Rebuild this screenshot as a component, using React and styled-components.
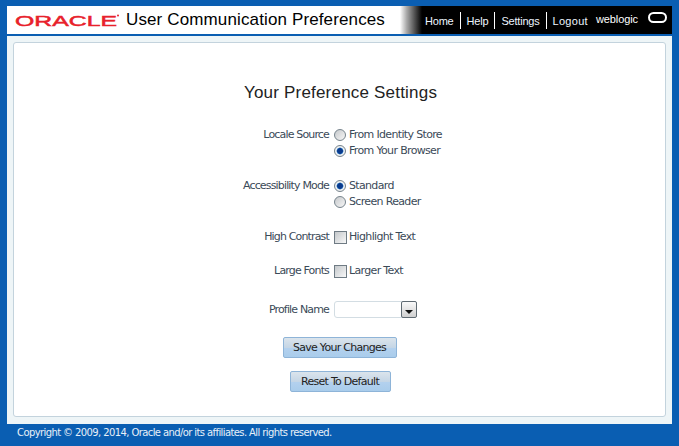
import React from "react";
import styled, { createGlobalStyle } from "styled-components";

const Global = createGlobalStyle`
  html, body { margin: 0; padding: 0; background: #0a5eb2; }
  body { font-family: "DejaVu Sans", Tahoma, sans-serif; }
`;
const Page = styled.div`
  width: 679px; height: 446px; box-sizing: border-box; padding: 6px 7px 0;
  background: #0a5eb2; display: flex; flex-direction: column; overflow: hidden;
`;
const Header = styled.header`
  height: 28px; display: flex; align-items: stretch; background: #fff; flex: none;
`;
const Brand = styled.div`
  display: flex; align-items: center; box-sizing: border-box; padding-left: 8px; width: 393px; flex: none;
`;
const Logo = styled.svg`
  width: 105px; height: 16px; flex: none; display: block;
`;
const AppTitle = styled.h1`
  margin: 0 0 0 6px; font: 400 17px "Liberation Sans", sans-serif; letter-spacing: .13px; color: #000; white-space: nowrap;
`;
const Fade = styled.div`
  width: 22px; flex: none; background: linear-gradient(90deg, #fff 0%, #aaa 30%, #555 65%, #000 100%);
`;
const Nav = styled.nav`
  flex: 1; background: #000; display: flex; align-items: center; padding-left: 3px; position: relative;
`;
const NavLink = styled.a`
  font: 11px "Liberation Sans", sans-serif; letter-spacing: ${p => (p.$last ? ".3px" : "-.2px")}; color: #eef6ff; padding: 0 ${p => (p.$last ? 0 : 6)}px 0 0; margin-right: ${p => (p.$last ? 8 : 6)}px; height: 17px; line-height: 19px;
  border-right: ${p => (p.$last ? "none" : "1px solid #fff")};
  white-space: nowrap;
`;
const User = styled.span`
  font: 11px "Liberation Sans", sans-serif; color: #fff; margin: -3px 0 0 0; letter-spacing: -.1px;
`;
const Oval = styled.span`
  position: absolute; left: 226px; top: 6px; width: 15px; height: 7px; border: 2px solid #fff; border-radius: 6px;
`;
const Rule = styled.div`
  height: 2px; background: #0a5eb2; flex: none;
`;
const Panel = styled.main`
  height: 388px; box-sizing: border-box; padding: 6px 6px 7px; background: #eef5f7; flex: none;
`;
const Card = styled.section`
  height: 100%; box-sizing: border-box; background: #fff; border: 1px solid #c3d3dd; border-radius: 3px;
  display: flex; flex-direction: column; align-items: stretch; padding-top: 40px;
  font-size: 11px; color: #333;
`;
const Title = styled.h2`
  margin: 0 0 24px; padding-left: 2px; text-align: center; font: 400 17px "Liberation Sans", sans-serif; letter-spacing: .2px; color: #222; line-height: 20px; height: 20px;
`;
const Row = styled.div`
  display: grid; grid-template-columns: 315px 1fr; column-gap: 5px; align-items: start; margin-bottom: ${p => p.$gap}px;
`;
const Label = styled.div`
  text-align: right; font: 11px/16px "DejaVu Sans", sans-serif; letter-spacing: -.84px; color: #3b4a58; white-space: nowrap;
  padding-top: ${p => p.$drop || 0}px;
`;
const Options = styled.div`
  display: flex; flex-direction: column;
`;
const Option = styled.div`
  height: 16px; display: flex; align-items: center;
  font: 11px/16px "DejaVu Sans", sans-serif; letter-spacing: -.66px; color: #3b4a58; white-space: nowrap;
`;
const Radio = styled.span`
  width: 12px; height: 12px; margin-right: 3px; border-radius: 50%; flex: none; box-sizing: border-box; border: 1px solid #76838c;
  background: ${p => (p.$on
    ? "radial-gradient(circle, #0a3a8c 0 2.5px, #3f88cc 3.1px, #eef0f2 3.8px)"
    : "linear-gradient(135deg, #c6c9cc, #f6f6f6)")};
`;
const Check = styled.span`
  width: 13px; height: 13px; margin-right: 2px; flex: none; box-sizing: border-box; border: 1px solid #6f7b84;
  background: linear-gradient(135deg, #c4c8cb, #f8f8f8);
`;
const Select = styled.div`
  width: 83px; height: 17px; box-sizing: border-box; border: 1px solid #d3dde3; border-radius: 3px; display: flex; justify-content: flex-end; background: #fff;
`;
const Arrow = styled.span`
  width: 16px; margin: -1px -1px -1px 0; box-sizing: border-box; border: 1px solid #5f6a72; border-radius: 2px; background: linear-gradient(#fafafa, #cfcfcf);
  display: flex; align-items: flex-end; justify-content: center; padding-bottom: 3px;
  &::before { content: ""; border: 4px solid transparent; border-top: 4px solid #111; border-bottom: 0; }
`;
const Actions = styled.div`
  display: flex; flex-direction: column; align-items: center; gap: 13px;
`;
const Button = styled.button`
  height: 21px; box-sizing: border-box; padding: 0; width: ${p => p.$w}px; margin-left: ${p => p.$shift || 0}px; border: 1px solid #8eb4d8; border-radius: 2px;
  background: linear-gradient(#dbe4ec 0%, #c5d6e6 50%, #b3d1ee 55%, #a9cceb 100%);
  font: 11px/17px "DejaVu Sans", sans-serif; letter-spacing: -.72px; color: #222;
`;
const Footer = styled.footer`
  font: 10px "DejaVu Sans", sans-serif; letter-spacing: -.6px; color: #e8f0f8; padding: 2px 0 0 10px; line-height: 14px; white-space: nowrap;
`;

export default function App() {
  return (
    <Page>
      <Global />
      <Header>
        <Brand>
          <Logo viewBox="0 0 105 16" aria-label="Oracle">
            <text x="0" y="13.5" textLength="102" lengthAdjust="spacingAndGlyphs" fill="#e8212b" stroke="#e8212b" strokeWidth=".5" fontFamily="Liberation Sans" fontWeight="400" fontSize="15.5">ORACLE</text>
            <circle cx="103" cy="3.6" r="1" fill="#e8212b" />
          </Logo>
          <AppTitle>User Communication Preferences</AppTitle>
        </Brand>
        <Fade />
        <Nav>
          <NavLink>Home</NavLink>
          <NavLink>Help</NavLink>
          <NavLink>Settings</NavLink>
          <NavLink $last>Logout</NavLink>
          <User>weblogic</User>
          <Oval />
        </Nav>
      </Header>
      <Rule />
      <Panel>
        <Card>
          <Title>Your Preference Settings</Title>
          <Row $gap={19}>
            <Label>Locale Source</Label>
            <Options>
              <Option><Radio />From Identity Store</Option>
              <Option><Radio $on />From Your Browser</Option>
            </Options>
          </Row>
          <Row $gap={19}>
            <Label>Accessibility Mode</Label>
            <Options>
              <Option><Radio $on />Standard</Option>
              <Option><Radio />Screen Reader</Option>
            </Options>
          </Row>
          <Row $gap={18}>
            <Label>High Contrast</Label>
            <Options><Option><Check />Highlight Text</Option></Options>
          </Row>
          <Row $gap={22}>
            <Label>Large Fonts</Label>
            <Options><Option><Check />Larger Text</Option></Options>
          </Row>
          <Row $gap={19}>
            <Label $drop={1}>Profile Name</Label>
            <Options><Select><Arrow /></Select></Options>
          </Row>
          <Actions>
            <Button $w={114}>Save Your Changes</Button>
            <Button $w={101} $shift={1}>Reset To Default</Button>
          </Actions>
        </Card>
      </Panel>
      <Footer>Copyright © 2009, 2014, Oracle and/or its affiliates. All rights reserved.</Footer>
    </Page>
  );
}
